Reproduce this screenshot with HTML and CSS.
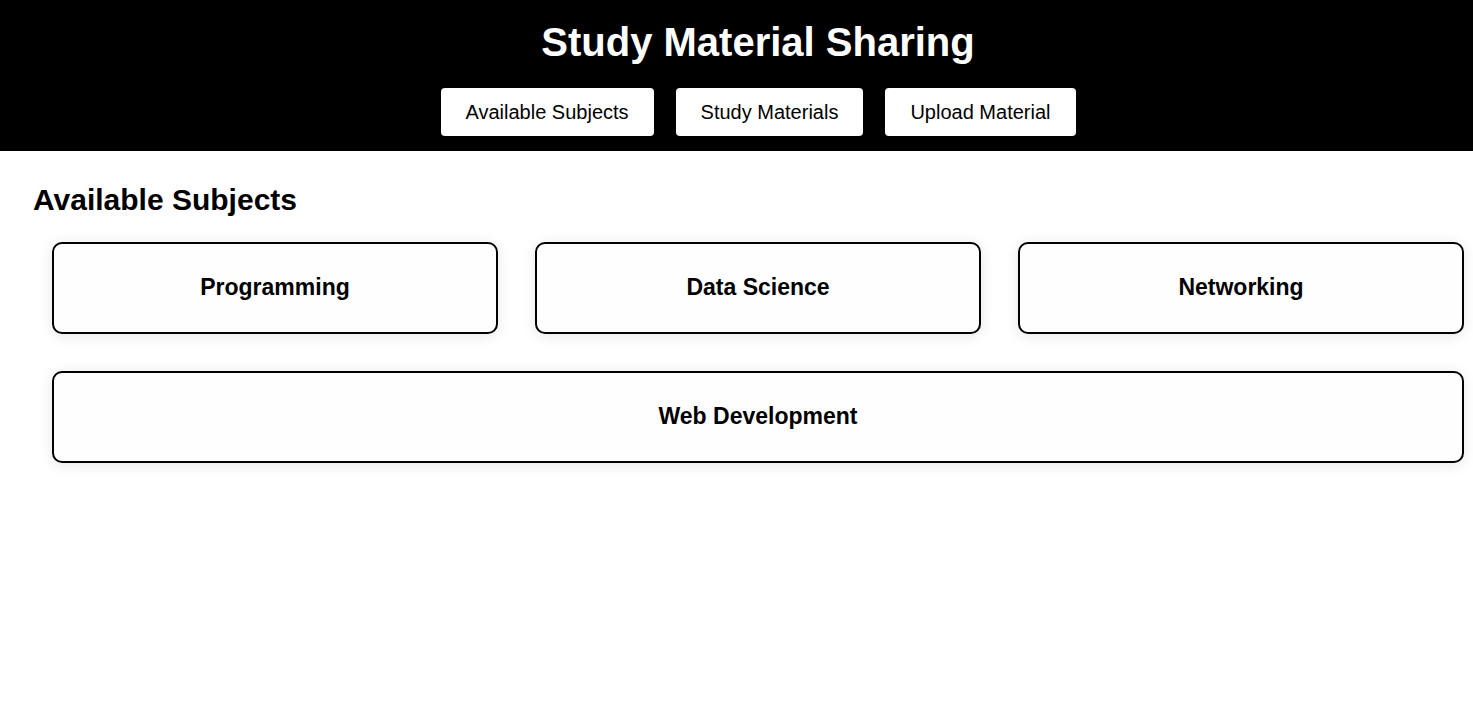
FILE: index.html
```html
<!DOCTYPE html>
<html lang="en">
<head>
<meta charset="utf-8">
<title>Study Material Sharing</title>
<link rel="stylesheet" href="styles.css">
</head>
<body>
<header class="site-header">
  <h1 class="site-title">Study Material Sharing</h1>
  <nav class="site-nav">
    <button class="nav-button" type="button">Available Subjects</button>
    <button class="nav-button" type="button">Study Materials</button>
    <button class="nav-button" type="button">Upload Material</button>
  </nav>
</header>
<main class="content">
  <h2 class="section-title">Available Subjects</h2>
  <div class="subjects">
    <div class="subject-card">Programming</div>
    <div class="subject-card">Data Science</div>
    <div class="subject-card">Networking</div>
    <div class="subject-card">Web Development</div>
  </div>
</main>
</body>
</html>
```
FILE: styles.css
```css
* {
  box-sizing: border-box;
}

body {
  margin: 0;
  background: #fff;
  color: #000;
  font-family: "Liberation Sans", Arial, sans-serif;
}

.site-header {
  padding: 19px 0 15px 43px;
  background: #000;
  text-align: center;
}

.site-title {
  margin: 0 0 23px;
  color: #fff;
  font-size: 40px;
  line-height: 46px;
}

.site-nav {
  display: flex;
  justify-content: center;
  gap: 22px;
}

.nav-button {
  padding: 12px 25px;
  border: 0;
  border-radius: 4px;
  background: #fff;
  color: #000;
  font-family: inherit;
  font-size: 20px;
  line-height: 24px;
  cursor: pointer;
}

.content {
  padding: 31px 9px 31px 33px;
}

.section-title {
  margin: 0 0 24px;
  font-size: 30px;
  line-height: 36px;
}

.subjects {
  display: flex;
  flex-wrap: wrap;
  gap: 37px;
  padding-left: 19px;
}

.subject-card {
  flex: 1 1 370px;
  padding: 29px 30px 31px;
  border: 2px solid #000;
  border-radius: 10px;
  background: #fefefe;
  box-shadow: 0 2px 14px rgba(0, 0, 0, 0.1);
  font-size: 23px;
  font-weight: 700;
  line-height: 28px;
  text-align: center;
}
```
